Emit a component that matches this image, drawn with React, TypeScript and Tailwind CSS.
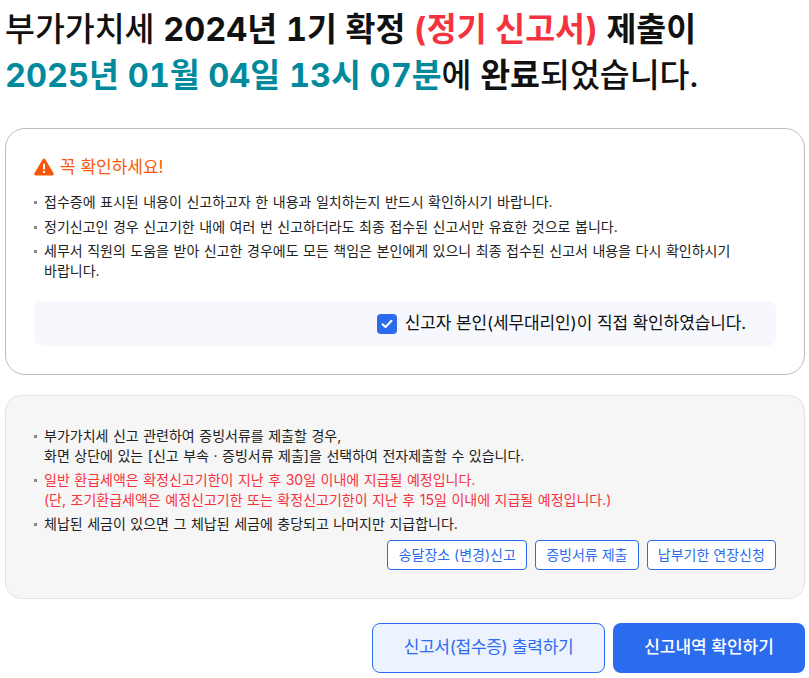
const font = "font-['Inter','Noto_Sans_CJK_KR',sans-serif]";

function Bullet({ children, red }: { children: React.ReactNode; red?: boolean }) {
  return (
    <li className={`relative pl-[10px] text-[14px] leading-[19.6px] [word-spacing:0.6px] ${red ? "text-[#f5333f]" : "text-[#222222]"}`}>
      <span className="absolute left-0 top-[9px] h-[3px] w-[3px] bg-[#8a8a8a]" />
      {children}
    </li>
  );
}

function SmallButton({ children }: { children: React.ReactNode }) {
  return (
    <button className="h-[30px] rounded-[4px] border border-[#2b6cee] bg-white px-[10.2px] text-[14px] text-[#2b6cee]">
      {children}
    </button>
  );
}

export default function App() {
  return (
    <div className={`${font} h-[678px] w-[809px] overflow-hidden bg-white px-[5px] pt-[7px]`}>
      <h1 className="text-[32.5px] font-medium leading-[46px] tabular-nums text-[#111111]">
        부가가치세 <b className="font-bold">2024년 1기 확정</b>{" "}
        <b className="font-bold text-[#f5333f]">(정기 신고서)</b>{" "}
        <b className="font-bold">제출이</b>
        <br />
        <b className="font-bold text-[#008a9c]">2025년 01월 04일 13시 07분</b>에{" "}
        <b className="font-bold">완료</b>되었습니다.
      </h1>

      <section className="mt-[29px] h-[247px] w-[800px] rounded-[20px] border border-[#bdbdbd] px-[28px] pt-[26px]">
        <div className="flex items-center gap-[6px] text-[17px] leading-[24px] text-[#f45a0c]">
          <svg width="20" height="18" viewBox="0 0 20 18" fill="#f9550a">
            <path d="M10 0.5c-.5 0-1 .3-1.300.8L.4 15.300c-.6 1 .1 2.200 1.300 2.200h16.600c1.200 0 1.900-1.200 1.300-2.200L11.300 1.300c-.3-.5-.8-.8-1.300-.8z" />
            <rect x="9" y="5.500" width="2" height="6" rx="1" fill="#ffffff" />
            <circle cx="10" cy="14" r="1.200" fill="#ffffff" />
          </svg>
          꼭 확인하세요!
        </div>
        <ul className="mt-[13px] flex flex-col gap-[5px] pr-[30px]">
          <Bullet>접수증에 표시된 내용이 신고하고자 한 내용과 일치하는지 반드시 확인하시기 바랍니다.</Bullet>
          <Bullet>정기신고인 경우 신고기한 내에 여러 번 신고하더라도 최종 접수된 신고서만 유효한 것으로 봅니다.</Bullet>
          <Bullet>세무서 직원의 도움을 받아 신고한 경우에도 모든 책임은 본인에게 있으니 최종 접수된 신고서 내용을 다시 확인하시기 바랍니다.</Bullet>
        </ul>
        <div className="mt-[21px] flex h-[45px] items-center justify-end rounded-[8px] bg-[#f7f8fe] pr-[30px]">
          <label className="flex items-center gap-[8px] text-[17px] tracking-[-0.12px] text-[#111111]">
            <span className="flex h-[20px] w-[20px] items-center justify-center rounded-[4px] bg-[#2b6cee]">
              <svg width="12" height="10" viewBox="0 0 12 10" fill="none" stroke="#ffffff" strokeWidth="2" strokeLinecap="round" strokeLinejoin="round">
                <path d="M1.500 5.200 4.500 8 10.500 1.800" />
              </svg>
            </span>
            신고자 본인(세무대리인)이 직접 확인하였습니다.
          </label>
        </div>
      </section>

      <section className="mt-[20px] h-[204px] w-[800px] rounded-[16px] border border-[#e4e4e4] bg-[#f6f6f6] px-[28px] pt-[30px]">
        <ul className="flex flex-col gap-[5px]">
          <Bullet>
            부가가치세 신고 관련하여 증빙서류를 제출할 경우,
            <br />
            화면 상단에 있는 [신고 부속 · 증빙서류 제출]을 선택하여 전자제출할 수 있습니다.
          </Bullet>
          <Bullet red>
            일반 환급세액은 확정신고기한이 지난 후 30일 이내에 지급될 예정입니다.
            <br />
            (단, 조기환급세액은 예정신고기한 또는 확정신고기한이 지난 후 15일 이내에 지급될 예정입니다.)
          </Bullet>
          <Bullet>체납된 세금이 있으면 그 체납된 세금에 충당되고 나머지만 지급합니다.</Bullet>
        </ul>
        <div className="mt-[6px] flex justify-end gap-[8px]">
          <SmallButton>송달장소 (변경)신고</SmallButton>
          <SmallButton>증빙서류 제출</SmallButton>
          <SmallButton>납부기한 연장신청</SmallButton>
        </div>
      </section>

      <div className="mt-[24px] flex w-[800px] justify-end gap-[8px]">
        <button className="h-[50px] w-[233px] rounded-[8px] border border-[#2b6cee] bg-[#ecf2fe] text-[17px] tracking-[-0.3px] text-[#2b6cee]">
          신고서(접수증) 출력하기
        </button>
        <button className="h-[50px] w-[192px] rounded-[8px] bg-[#2b6cee] text-[17px] font-medium text-white">
          신고내역 확인하기
        </button>
      </div>
    </div>
  );
}
